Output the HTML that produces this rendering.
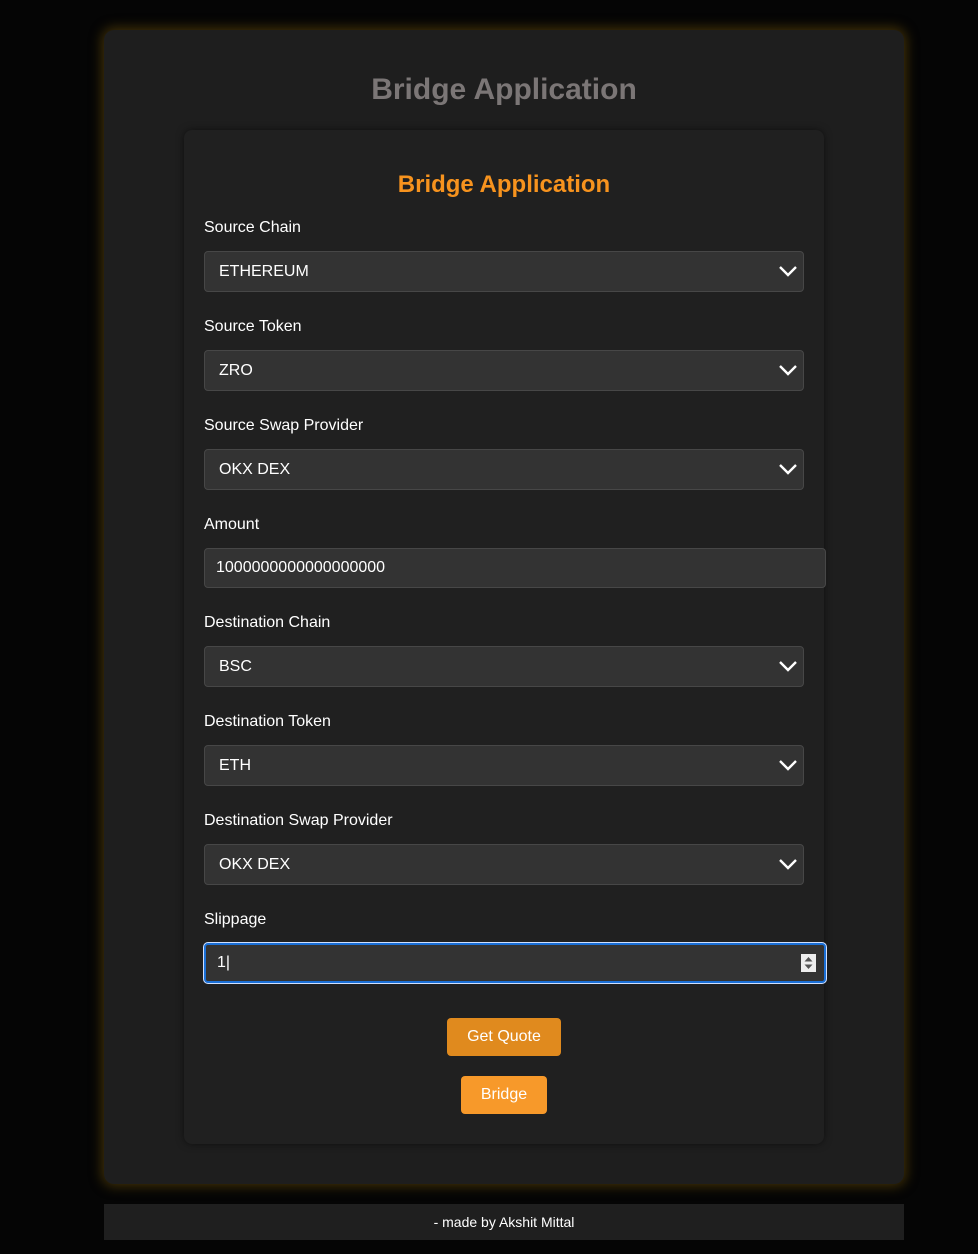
<!DOCTYPE html>
<html><head><style>
body{margin:0;background:#050505;font-family:"Liberation Sans",Arial,sans-serif;color:#fff;width:978px;height:1254px;position:relative;overflow:hidden}
.outer{position:absolute;left:104px;top:30px;width:800px;height:1154px;background:#1e1e1e;border-radius:10px;box-shadow:0 0 12px 2px rgba(120,90,10,.55)}
.h1{position:absolute;left:0;width:800px;top:45px;text-align:center;font-size:30px;font-weight:bold;color:#7b7676;line-height:1}
.card{position:absolute;left:80px;top:100px;width:640px;height:1014px;background:#202020;border-radius:8px;box-shadow:0 0 8px rgba(0,0,0,.5)}
.h2{position:absolute;left:0;width:640px;top:43px;text-align:center;font-size:24px;font-weight:bold;color:#f7931e;line-height:1}
.lbl{position:absolute;left:20px;font-size:16px;line-height:1;margin-top:1px}
.sel{position:absolute;left:20px;width:598px;height:39px;background:#333;border:1px solid #474747;border-radius:4px;font-size:16px;line-height:39px;box-sizing:content-box}
.sel span{padding-left:14px}
.sel svg{position:absolute;right:6px;top:13px}
.inp{position:absolute;left:20px;width:622px;height:40px;background:#333;border:1px solid #474747;border-radius:4px;font-size:16px;line-height:38px;box-sizing:border-box;padding-left:11px}
.btn{position:absolute;height:38px;line-height:38px;text-align:center;font-size:16px;border-radius:4px;color:#fff}
.foot{position:absolute;left:104px;top:1204px;width:800px;height:36px;background:#1f1f1f;text-align:center;font-size:14px;line-height:36px}
</style></head><body>
<div class="outer">
<div class="h1">Bridge Application</div>
<div class="card">
<div class="h2">Bridge Application</div>

<div class="lbl" style="top:89px">Source Chain</div>
<div class="sel" style="top:121px"><span>ETHEREUM</span><svg width="18" height="12" viewBox="0 0 18 12"><path d="M1 2l8 8 8-8" fill="none" stroke="#fff" stroke-width="2.4"/></svg></div>

<div class="lbl" style="top:188px">Source Token</div>
<div class="sel" style="top:220px"><span>ZRO</span><svg width="18" height="12" viewBox="0 0 18 12"><path d="M1 2l8 8 8-8" fill="none" stroke="#fff" stroke-width="2.4"/></svg></div>

<div class="lbl" style="top:287px">Source Swap Provider</div>
<div class="sel" style="top:319px"><span>OKX DEX</span><svg width="18" height="12" viewBox="0 0 18 12"><path d="M1 2l8 8 8-8" fill="none" stroke="#fff" stroke-width="2.4"/></svg></div>

<div class="lbl" style="top:386px">Amount</div>
<div class="inp" style="top:418px">1000000000000000000</div>

<div class="lbl" style="top:484px">Destination Chain</div>
<div class="sel" style="top:516px"><span>BSC</span><svg width="18" height="12" viewBox="0 0 18 12"><path d="M1 2l8 8 8-8" fill="none" stroke="#fff" stroke-width="2.4"/></svg></div>

<div class="lbl" style="top:583px">Destination Token</div>
<div class="sel" style="top:615px"><span>ETH</span><svg width="18" height="12" viewBox="0 0 18 12"><path d="M1 2l8 8 8-8" fill="none" stroke="#fff" stroke-width="2.4"/></svg></div>

<div class="lbl" style="top:682px">Destination Swap Provider</div>
<div class="sel" style="top:714px"><span>OKX DEX</span><svg width="18" height="12" viewBox="0 0 18 12"><path d="M1 2l8 8 8-8" fill="none" stroke="#fff" stroke-width="2.4"/></svg></div>

<div class="lbl" style="top:781px">Slippage</div>
<div class="inp" style="top:813px;border:2px solid #1a6fd6;box-shadow:0 0 0 1px #cfe0ff;padding-left:11px;line-height:36px">1|
<div style="position:absolute;right:8px;top:9px;width:15px;height:18px;background:#eee"><svg width="15" height="18" viewBox="0 0 15 18" style="display:block"><path d="M3.5 7.5l4-4.5 4 4.5zM3.5 10.5l4 4.5 4-4.5z" fill="#555"/></svg></div></div>

<div class="btn" style="left:263px;top:888px;width:114px;background:#e08a1e">Get Quote</div>
<div class="btn" style="left:277px;top:946px;width:86px;background:#f7992a">Bridge</div>
</div>
</div>
<div class="foot">- made by Akshit Mittal</div>
</body></html>
